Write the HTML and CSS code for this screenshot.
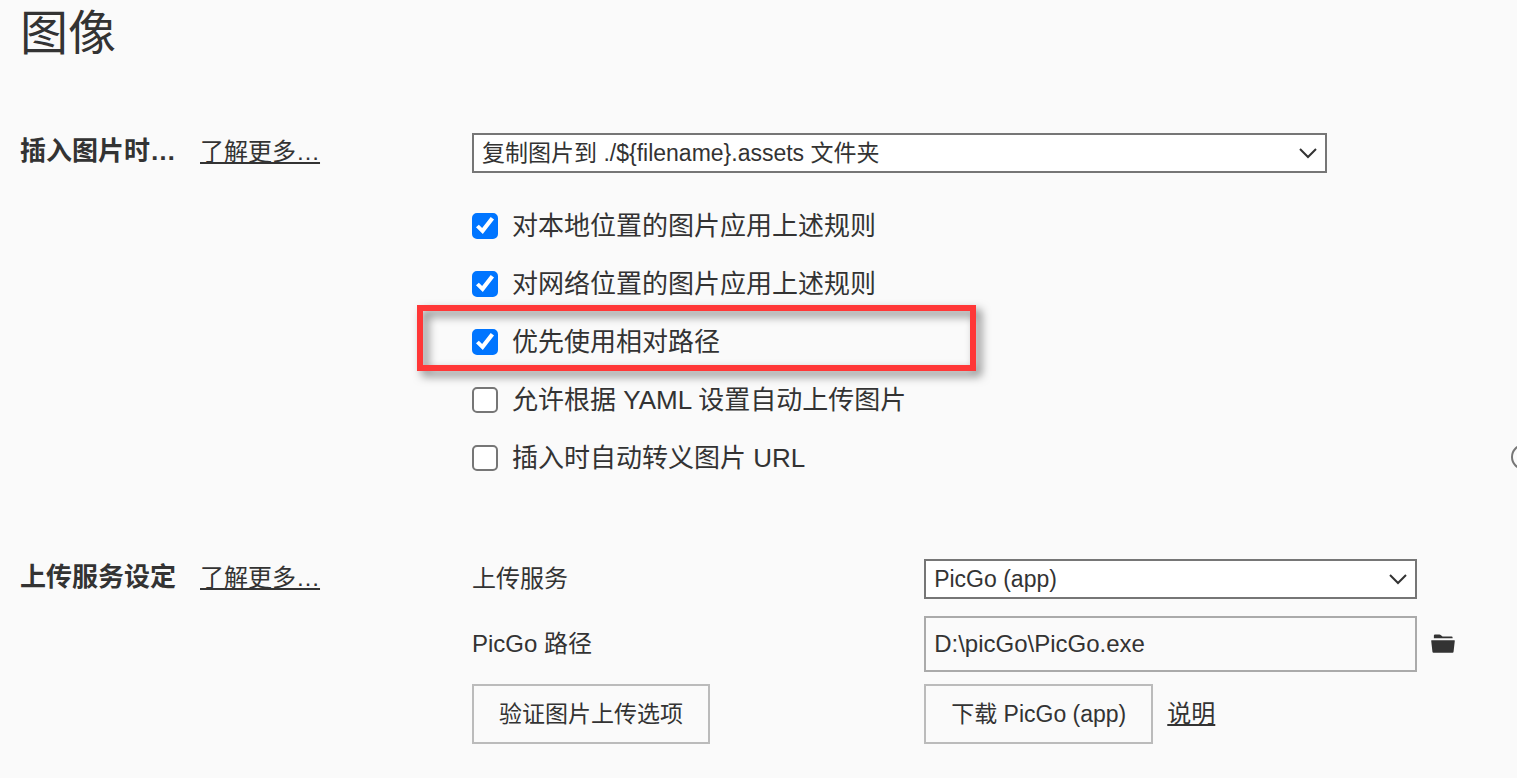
FILE: index.html
```html
<!DOCTYPE html>
<html lang="zh-CN">
<head>
<meta charset="utf-8">
<meta name="viewport" content="width=device-width, initial-scale=1">
<title>图像</title>
<link rel="stylesheet" href="styles.css">
</head>
<body>
<main class="page">
  <h1 class="title">图像</h1>

  <section class="section">
    <div class="section-head">
      <h2 class="section-title" id="insert-title">插入图片时…</h2>
      <a class="link" href="#insert">了解更多…</a>
    </div>
    <div class="section-body">
      <div class="select-box select-wide">
        <select class="select" aria-labelledby="insert-title">
          <option>复制图片到 ./${filename}.assets 文件夹</option>
        </select>
        <svg class="chevron" viewBox="0 0 18 11" aria-hidden="true"><path d="M1 1l8 8 8-8"/></svg>
      </div>
      <div class="checks">
        <label class="check"><input type="checkbox" class="box" checked>对本地位置的图片应用上述规则</label>
        <label class="check"><input type="checkbox" class="box" checked>对网络位置的图片应用上述规则</label>
        <label class="check check-marked"><input type="checkbox" class="box" checked>优先使用相对路径</label>
        <label class="check"><input type="checkbox" class="box">允许根据 YAML 设置自动上传图片</label>
        <label class="check"><input type="checkbox" class="box">插入时自动转义图片 URL</label>
      </div>
    </div>
  </section>

  <section class="section">
    <div class="section-head">
      <h2 class="section-title">上传服务设定</h2>
      <a class="link" href="#upload">了解更多…</a>
    </div>
    <div class="section-body rows">
      <div class="row row-service">
        <label class="row-label" for="service">上传服务</label>
        <div class="select-box">
          <select class="select" id="service">
            <option>PicGo (app)</option>
          </select>
          <svg class="chevron" viewBox="0 0 18 11" aria-hidden="true"><path d="M1 1l8 8 8-8"/></svg>
        </div>
      </div>
      <div class="row">
        <label class="row-label" for="path">PicGo 路径</label>
        <input class="input" id="path" type="text" value="D:\picGo\PicGo.exe">
        <button class="browse" type="button" aria-label="选择文件">
          <svg class="folder" viewBox="0 0 25 20" aria-hidden="true"><path d="M3 4V1.200Q3 0 4.200 0h4.500q1 0 1.700.8L12 2.300h9.500q1 0 1 1V4z"/><path d="M.7 6h23.600q.6 0 .5.600L23.500 18q-.1 1-1 1H2.600q-1 0-1.100-1L.2 6.600Q.1 6 .7 6z"/></svg>
        </button>
      </div>
      <div class="row">
        <div><button class="button" type="button">验证图片上传选项</button></div>
        <div class="actions">
          <button class="button" type="button">下载 PicGo (app)</button>
          <a class="link" href="#help">说明</a>
        </div>
      </div>
    </div>
  </section>
  <span class="edge-ring" aria-hidden="true"></span>
</main>
</body>
</html>
```

FILE: styles.css
```css
*,
*::before,
*::after {
  box-sizing: border-box;
}

body {
  margin: 0;
  background: #fafafa;
  color: #333;
  font: 400 24px/36px "Liberation Sans", "Noto Sans CJK SC", sans-serif;
}

select,
input,
button {
  margin: 0;
  color: inherit;
  font: inherit;
}

.page {
  position: relative;
  min-height: 100vh;
  padding: 0 62px 34px 20px;
  overflow: hidden;
}

.title {
  margin: 0 0 65px;
  font-size: 48px;
  font-weight: 400;
  line-height: 68px;
}

.section {
  display: grid;
  grid-template-columns: 452px minmax(0, 1fr);
  margin-bottom: 83px;
}

.section:last-of-type {
  margin-bottom: 0;
}

.section-head {
  display: flex;
  align-items: baseline;
  gap: 24px;
}

.section-title {
  margin: 0;
  font-size: 26px;
  font-weight: 700;
  line-height: 36px;
}

.link {
  color: inherit;
  text-decoration: underline;
  text-decoration-thickness: 2px;
  text-decoration-skip-ink: none;
  text-underline-offset: 2px;
}

.select-box {
  display: grid;
  align-items: center;
}

.select-wide {
  width: 87%;
}

.select,
.chevron {
  grid-area: 1 / 1;
}

.select {
  appearance: none;
  width: 100%;
  height: 40px;
  padding: 0 40px 0 8px;
  border: 2px solid #767676;
  border-radius: 0;
  background: #fff;
  font-size: 23px;
}

.chevron {
  justify-self: end;
  width: 18px;
  height: 11px;
  margin-right: 10px;
  fill: none;
  stroke: #333;
  stroke-width: 2;
  pointer-events: none;
}

.checks {
  display: flex;
  flex-direction: column;
  gap: 22px;
  padding-top: 35px;
}

.check {
  position: relative;
  display: flex;
  align-items: center;
  align-self: flex-start;
  gap: 14px;
  font-size: 26px;
}

.check-marked::after {
  content: "";
  position: absolute;
  top: -19px;
  left: -55px;
  width: 559px;
  height: 66px;
  border: 6px solid #ff3737;
  filter: drop-shadow(5px 5px 5px rgba(0, 0, 0, 0.5));
  pointer-events: none;
}

.box {
  appearance: none;
  display: grid;
  width: 26px;
  height: 26px;
  border: 2px solid #767676;
  border-radius: 5px;
  background: #fff;
}

.box:checked {
  border-color: #0075ff;
  background: #0075ff;
}

.box:checked::before {
  content: "";
  background: #fff;
  clip-path: polygon(9% 56%, 22% 44%, 37% 59%, 76% 9%, 91% 20%, 40% 86%);
}

.rows {
  display: flex;
  flex-direction: column;
  gap: 12px;
}

.row {
  display: grid;
  grid-template-columns: 46% minmax(0, 1fr) 24px;
  align-items: center;
}

.row .input,
.row .select-box {
  margin-right: 14px;
}

.row-service {
  margin-bottom: 5px;
}

.input {
  height: 56px;
  padding: 0 8px;
  border: 2px solid #aaa;
  border-radius: 0;
  background: transparent;
}

.browse {
  display: flex;
  padding: 0;
  border: 0;
  background: none;
}

.folder {
  width: 25px;
  height: 20px;
  fill: #333;
}

.actions {
  display: flex;
  align-items: center;
  gap: 14px;
}

.button {
  height: 60px;
  padding: 0 25px;
  border: 2px solid #bbb;
  background: transparent;
  font-size: 23px;
}

.edge-ring {
  position: absolute;
  top: 444px;
  right: -20px;
  width: 26px;
  height: 26px;
  border: 2px solid #767676;
  border-radius: 50%;
}
```
